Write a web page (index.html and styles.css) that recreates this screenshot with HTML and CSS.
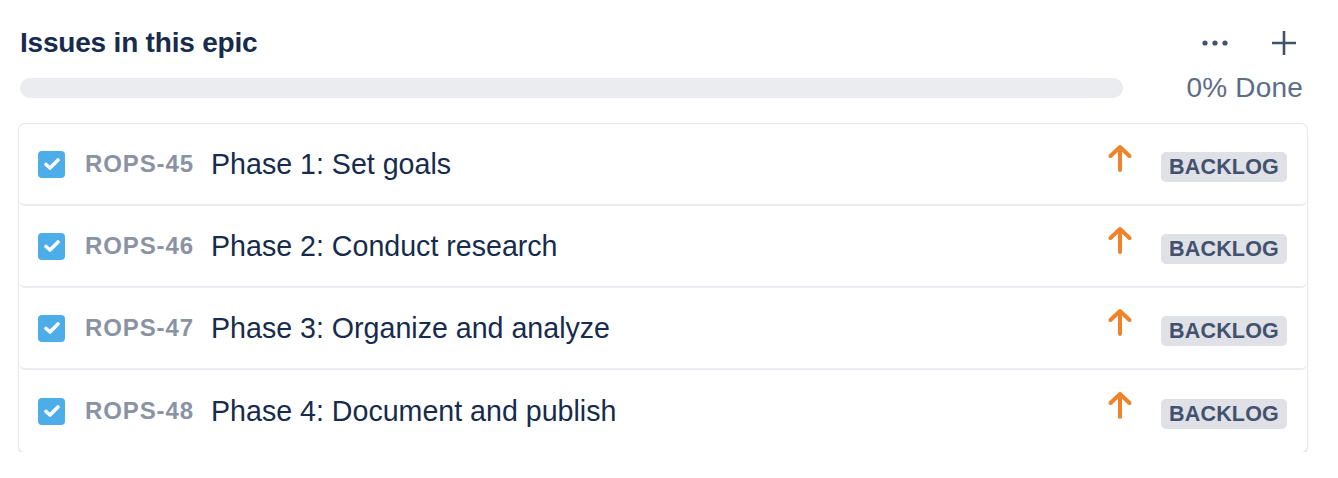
FILE: index.html
```html
<!DOCTYPE html>
<html>
<head>
<meta charset="utf-8">
<link rel="stylesheet" href="styles.css">
</head>
<body>
<div class="page">
  <div class="header">
    <h2 class="title">Issues in this epic</h2>
    <div class="actions">
      <span class="btn"><svg width="26" height="8" viewBox="0 0 26 8"><circle cx="3" cy="4" r="2.6" fill="#42526E"/><circle cx="13" cy="4" r="2.6" fill="#42526E"/><circle cx="23" cy="4" r="2.6" fill="#42526E"/></svg></span>
      <span class="btn"><svg width="24" height="24" viewBox="0 0 24 24"><path d="M12 0V24M0 12H24" stroke="#42526E" stroke-width="2.6"/></svg></span>
    </div>
  </div>
  <div class="progress">
    <div class="bar"></div>
    <span class="done">0% Done</span>
  </div>
  <div class="card">
    <div class="row">
      <span class="check"><svg width="18" height="14" viewBox="0 0 18 14"><path d="M3 7.5L7 11L15 3" fill="none" stroke="#fff" stroke-width="3.6" stroke-linecap="round" stroke-linejoin="round"/></svg></span>
      <span class="key">ROPS-45</span>
      <span class="summary">Phase 1: Set goals</span>
      <span class="prio"><svg width="28" height="28" viewBox="0 0 28 28"><path d="M14 3V26M4.5 12L14 3L23.5 12" fill="none" stroke="#F0822A" stroke-width="4" stroke-linecap="round" stroke-linejoin="round"/></svg></span>
      <span class="lozenge">BACKLOG</span>
    </div>
    <div class="row">
      <span class="check"><svg width="18" height="14" viewBox="0 0 18 14"><path d="M3 7.5L7 11L15 3" fill="none" stroke="#fff" stroke-width="3.6" stroke-linecap="round" stroke-linejoin="round"/></svg></span>
      <span class="key">ROPS-46</span>
      <span class="summary">Phase 2: Conduct research</span>
      <span class="prio"><svg width="28" height="28" viewBox="0 0 28 28"><path d="M14 3V26M4.5 12L14 3L23.5 12" fill="none" stroke="#F0822A" stroke-width="4" stroke-linecap="round" stroke-linejoin="round"/></svg></span>
      <span class="lozenge">BACKLOG</span>
    </div>
    <div class="row">
      <span class="check"><svg width="18" height="14" viewBox="0 0 18 14"><path d="M3 7.5L7 11L15 3" fill="none" stroke="#fff" stroke-width="3.6" stroke-linecap="round" stroke-linejoin="round"/></svg></span>
      <span class="key">ROPS-47</span>
      <span class="summary">Phase 3: Organize and analyze</span>
      <span class="prio"><svg width="28" height="28" viewBox="0 0 28 28"><path d="M14 3V26M4.5 12L14 3L23.5 12" fill="none" stroke="#F0822A" stroke-width="4" stroke-linecap="round" stroke-linejoin="round"/></svg></span>
      <span class="lozenge">BACKLOG</span>
    </div>
    <div class="row">
      <span class="check"><svg width="18" height="14" viewBox="0 0 18 14"><path d="M3 7.5L7 11L15 3" fill="none" stroke="#fff" stroke-width="3.6" stroke-linecap="round" stroke-linejoin="round"/></svg></span>
      <span class="key">ROPS-48</span>
      <span class="summary">Phase 4: Document and publish</span>
      <span class="prio"><svg width="28" height="28" viewBox="0 0 28 28"><path d="M14 3V26M4.5 12L14 3L23.5 12" fill="none" stroke="#F0822A" stroke-width="4" stroke-linecap="round" stroke-linejoin="round"/></svg></span>
      <span class="lozenge">BACKLOG</span>
    </div>
  </div>
</div>
</body>
</html>
```

FILE: styles.css
```css
html, body {
  margin: 0;
  padding: 0;
  background: #ffffff;
}

body {
  font-family: "Liberation Sans", Arial, sans-serif;
  color: #172B4D;
}

.page {
  padding: 27px 31px 0 19px;
}

.header {
  display: flex;
  align-items: center;
  justify-content: space-between;
  height: 32px;
}

.title {
  margin: 0 0 0 1px;
  font-size: 28px;
  line-height: 32px;
  font-weight: 700;
  color: #172B4D;
  letter-spacing: -0.2px;
}

.actions {
  display: flex;
  align-items: center;
  gap: 44px;
  margin-right: 11px;
}

.btn {
  display: flex;
  align-items: center;
  justify-content: center;
}

.progress {
  display: flex;
  align-items: center;
  margin: 13px 4px 0 1px;
  height: 32px;
}

.bar {
  flex: 1;
  height: 20px;
  border-radius: 10px;
  background: #EBECF0;
}

.done {
  margin-left: 63px;
  font-size: 28px;
  line-height: 32px;
  color: #5E6C84;
  letter-spacing: 0.2px;
}

.card {
  margin-top: 20px;
  border-radius: 6px;
  background: #fff;
  box-shadow: 0 0 0 1px #E6E8EC, 0 2px 2px rgba(9, 30, 66, 0.24);
}

.row {
  display: flex;
  align-items: center;
  height: 80px;
  padding: 0 20px 0 19px;
  border-bottom: 2px solid #EBECF0;
  border-radius: 6px;
}

.row:last-child {
  border-bottom: none;
  height: 82px;
}

.check {
  width: 27px;
  height: 27px;
  border-radius: 4px;
  background: #4CADE9;
  display: flex;
  align-items: center;
  justify-content: center;
  flex: none;
}

.key {
  margin-left: 20px;
  font-size: 24px;
  font-weight: 700;
  color: #8993A4;
  letter-spacing: 0.9px;
}

.summary {
  margin-left: 17px;
  font-size: 28.6px;
  color: #172B4D;
  flex: 1;
}

.prio {
  display: flex;
  margin-bottom: 12px;
}

.lozenge {
  margin-left: 27px;
  margin-top: 6px;
  width: 126px;
  height: 30px;
  border-radius: 5px;
  background: #DFE1E6;
  color: #42526E;
  font-size: 21.5px;
  font-weight: 700;
  line-height: 30px;
  text-align: center;
  letter-spacing: 0.2px;
}
```
